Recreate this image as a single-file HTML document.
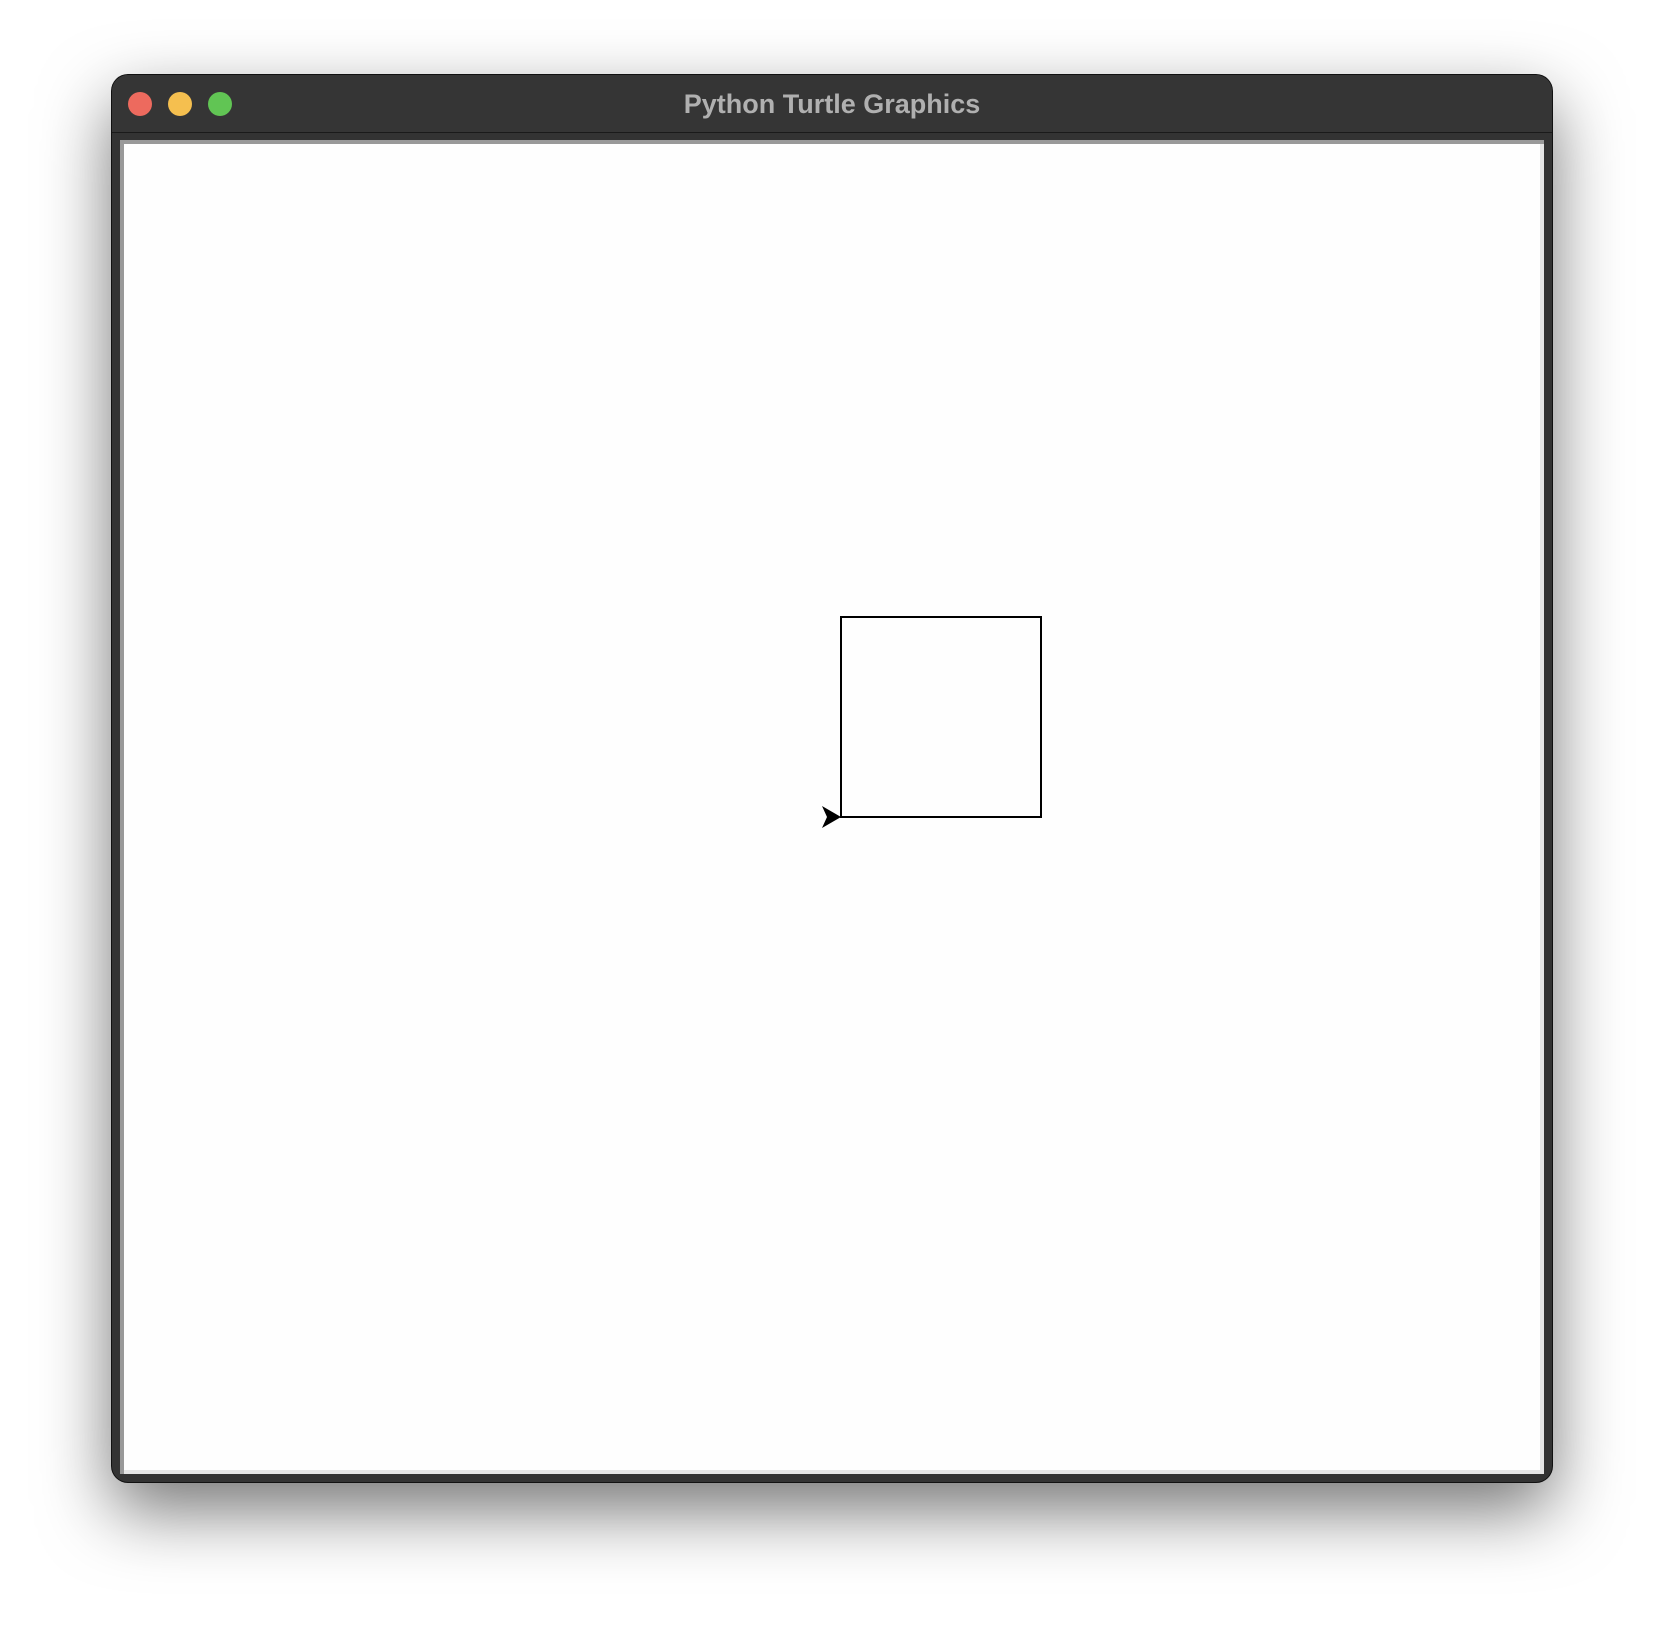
<!DOCTYPE html>
<html><head><meta charset="utf-8"><style>
html,body{margin:0;padding:0;background:#fff;width:1664px;height:1630px;overflow:hidden}
.win{position:absolute;left:112px;top:75px;width:1440px;height:1407px;background:#333;border-radius:16px;box-shadow:0 0 0 1px #111,0 28px 70px rgba(0,0,0,0.55);overflow:hidden}
.tb{position:absolute;left:0;top:0;right:0;height:57px;background:#353535;border-bottom:1px solid #1a1a1a}
.c{position:absolute;top:17px;width:24px;height:24px;border-radius:50%}
.t{position:absolute;left:0;right:0;top:14px;text-align:center;font:bold 27px "Liberation Sans",sans-serif;color:#b0b0b0}
.cv{position:absolute;left:8px;top:65px;width:1424px;height:1334px;background:#e5e5e5;border-top:4px solid #999;border-left:4px solid #999;box-sizing:border-box}
.w{position:absolute;left:0;top:0;width:1416px;height:1326px;background:#fefefe}
</style></head><body>
<div class="win">
<div class="tb"><div class="c" style="left:16px;background:#ED6A5E"></div><div class="c" style="left:56px;background:#F5BF4F"></div><div class="c" style="left:96px;background:#61C554"></div>
<div class="t">Python Turtle Graphics</div></div>
<div class="cv"><div class="w"></div></div>
</div>
<svg style="position:absolute;left:0;top:0" width="1664" height="1630">
<rect x="841" y="617" width="200" height="200" fill="none" stroke="#000" stroke-width="2"/>
<path d="M841 817 L822 806 L827 817 L822 828 Z" fill="#000"/>
</svg>
</body></html>
